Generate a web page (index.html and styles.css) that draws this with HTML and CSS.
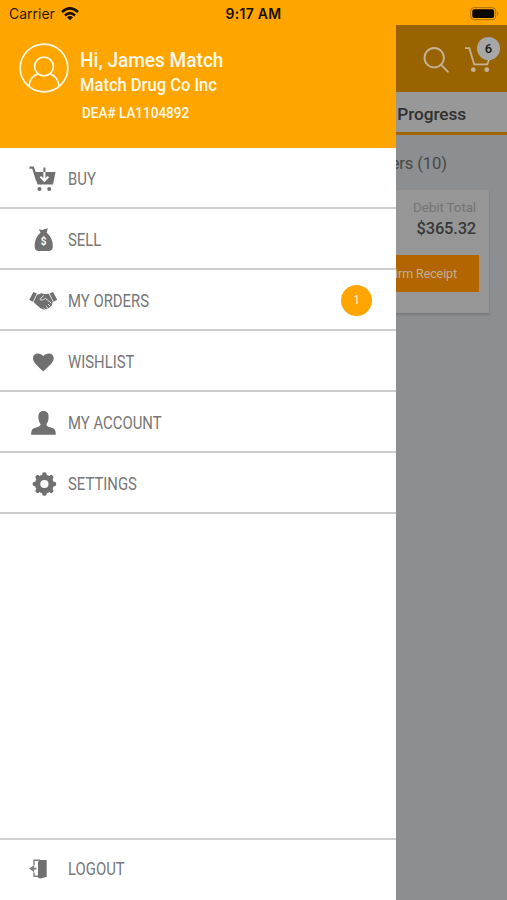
FILE: index.html
```html
<!DOCTYPE html>
<html lang="en">
<head>
<meta charset="utf-8">
<title>Menu</title>
<link rel="stylesheet" href="styles.css">
</head>
<body>
<div class="app">
  <header class="status">
    <div class="carrier"><span>Carrier</span>
      <svg width="18" height="14" viewBox="0 0 18 14"><g fill="none" stroke="#171000" stroke-width="2.6"><path d="M1 5Q9-2.2 17 5"/><path d="M4 8.4Q9 4 14 8.4"/></g><path d="M6 10.3Q9 7.8 12 10.3L9 13.3Z" fill="#171000"/></svg>
    </div>
    <div class="time">9:17 AM</div>
    <svg class="battery" width="30" height="14" viewBox="0 0 30 14"><rect x=".7" y=".7" width="25" height="12" rx="3.5" fill="none" stroke="#a96f08"/><rect x="2.3" y="2.3" width="21.8" height="8.8" rx="2" fill="#080500"/><path d="M27.3 4.5Q29.5 6.7 27.3 9Z" fill="#a96f08"/></svg>
  </header>
  <div class="stage">
    <main class="screen">
      <div class="toolbar">
        <svg width="27" height="27" viewBox="0 0 27 27" fill="none" stroke="#c3b293" stroke-width="1.9"><circle cx="11.2" cy="10.7" r="9.7"/><path d="M18 17.7L25.5 25.3"/></svg>
        <div class="cart">
          <svg width="28" height="26" viewBox="0 0 28 26" fill="none" stroke="#c3b293" stroke-width="1.8"><path d="M0 1.2H4.3L9.2 17.4H22.3L26 7"/><g fill="#c3b293" stroke="none"><circle cx="8.3" cy="22.7" r="2.4"/><circle cx="21.8" cy="22.7" r="2.4"/></g></svg>
          <span class="count">6</span>
        </div>
      </div>
      <div class="tab">Progress</div>
      <div class="section">ers (10)</div>
      <div class="card">
        <div class="debit">Debit Total</div>
        <div class="amount">$365.32</div>
        <div class="confirm">Confirm Receipt</div>
      </div>
    </main>
    <aside class="drawer">
      <div class="profile">
        <svg width="50" height="50" viewBox="0 0 50 50" fill="none" stroke="#fff6df" stroke-width="1.8"><circle cx="25" cy="25" r="23.8"/><circle cx="25" cy="23.5" r="9.4"/><path d="M9.8 43.2C11 35.5 14.5 32 19 30.8M31 30.8C35.5 32 39 35.5 40.2 43.2"/></svg>
        <div class="who">
          <div class="name"><span>Hi, James Match</span></div>
          <div class="company"><span>Match Drug Co Inc</span></div>
          <div class="dea"><span>DEA# LA1104892</span></div>
        </div>
      </div>
      <nav class="menu">
        <div class="item">
          <svg viewBox="0 0 30 30"><path d="M1.5 3.6H5L9.3 16.8" fill="none" stroke="#707070" stroke-width="2.2"/><path d="M6 8H27.5L25 20.5H9.5Z" fill="#707070"/><path d="M16.4 8V16M12.4 12.6L16.4 16.8L20.4 12.6" fill="none" stroke="#fff" stroke-width="2"/><path d="M16.4 3.5V8" stroke="#707070" stroke-width="2"/><circle cx="11.5" cy="25" r="2" fill="#707070"/><circle cx="21.2" cy="25" r="2" fill="#707070"/></svg>
          <span class="label">BUY</span>
        </div>
        <div class="item">
          <svg viewBox="0 0 30 30"><path d="M12.6 7.8L10.8 4.2L14 5L19.8 3.3L18.7 7.8C22.6 10.8 25 16 24.8 21.4C24.8 24.7 23 26 19.8 26H11.7C8.5 26 6.7 24.7 6.7 21.4C6.7 16 8.5 11 12.6 7.8Z" fill="#707070"/><text x="15.6" y="20.2" class="dollar">$</text></svg>
          <span class="label">SELL</span>
        </div>
        <div class="item">
          <svg viewBox="0 0 30 30"><path d="M5.4 6L8.8 7.6L4.8 15.8L1.3 13.8ZM25 6L21.6 7.6L25.6 15.8L29.2 13.8Z" fill="#707070"/><path d="M9 8.8L13.5 7.3L16 8L20.8 7.8L24.8 15.6L23.8 19.5L20.5 22.3L16 23.7L12.5 22.2L8 18.5L5.5 16Z" fill="#707070"/><path d="M15.8 9.3L11.9 13.3Q13.5 15.3 17.5 12.4L23.5 17.3M15.5 22L17.3 23.5M17.8 20L20 22.2M20 18L22.2 20.3" fill="none" stroke="#fff" stroke-width=".8"/></svg>
          <span class="label">MY ORDERS</span><span class="badge">1</span>
        </div>
        <div class="item">
          <svg viewBox="0 0 30 30"><path d="M15.3 24.5C11.5 20.5 5 16 5 11.5C5 5.5 12 5 15.3 9C18.6 5 25.7 5.5 25.7 11.5C25.7 16 19.1 20.5 15.3 24.5Z" fill="#707070"/></svg>
          <span class="label">WISHLIST</span>
        </div>
        <div class="item">
          <svg viewBox="0 0 30 30"><path d="M10.4 8.5C10.1 1.3 20.9 1.3 20.6 8.5C20.6 12.5 19.7 14.5 18.5 16C18.1 18.3 21 19 24.7 20C27.4 21 27.7 23.5 27.8 26.8H3.2C3.3 23.5 3.6 21 6.3 20C10 19 12.9 18.3 12.5 16C11.3 14.5 10.4 12.5 10.4 8.5Z" fill="#707070"/></svg>
          <span class="label">MY ACCOUNT</span>
        </div>
        <div class="item">
          <svg viewBox="-16.4 -15 30 30"><g fill="#707070"><circle r="9.5"/><g id="teeth"><rect x="-2.2" y="-11.7" width="4.4" height="23.4" rx="1.8"/><rect x="-11.7" y="-2.2" width="23.4" height="4.4" rx="1.8"/></g><use href="#teeth" transform="rotate(45)"/></g><circle r="4.1" fill="#fff"/></svg>
          <span class="label">SETTINGS</span>
        </div>
      </nav>
      <div class="item logout">
        <svg viewBox="0 0 30 30"><path d="M6 11V6.3H12M6 18.5V22.3H11" fill="none" stroke="#808080" stroke-width="1.4"/><path d="M10 8L12 6H18.7V23L12 24.5L10 23.5Z" fill="#707070"/><path d="M8.5 14.6H3.8M5.3 12.6L2.4 14.6L5.3 16.7Z" fill="#808080" stroke="#808080" stroke-width="1.6"/></svg>
        <span class="label">LOGOUT</span>
      </div>
    </aside>
  </div>
</div>
</body>
</html>
```
FILE: styles.css
```css
* { box-sizing: border-box; }
body { margin: 0; font-family: Roboto, sans-serif; }
.app { width: 507px; height: 900px; display: flex; flex-direction: column; overflow: hidden; background: #ffa500; }
.status { height: 25px; flex: none; display: grid; grid-template-columns: 1fr auto 1fr; align-items: center; padding: 2px 7px 0 9px; font: 14px/20px Inter, sans-serif; color: #2b1c00; }
.carrier { display: flex; align-items: center; gap: 6px; }
.time { font-weight: 600; font-size: 14px; color: #171000; letter-spacing: .3px; margin-right: 2px; }
.battery { justify-self: end; }
.stage { position: relative; flex: 1; min-height: 0; }
.screen { height: 100%; background: #8c8f91; display: flex; flex-direction: column; align-items: flex-end; }
.toolbar { width: 100%; height: 67px; background: #986300; display: flex; justify-content: flex-end; align-items: flex-start; gap: 15px; padding: 22px 14px 0; }
.cart { position: relative; width: 28px; height: 26px; }
.count { position: absolute; left: 12px; top: -10px; width: 23px; height: 23px; border-radius: 50%; background: #a7a7a7; color: #151515; font-size: 13px; font-weight: 500; line-height: 23px; text-align: center; }
.tab { width: 100%; height: 43px; border-bottom: 3px solid #a36405; background: #989898; padding: 2px 41px 0 0; text-align: right; font-size: 17.3px; font-weight: 500; letter-spacing: -.1px; line-height: 41px; color: #303030; }
.section { height: 55px; padding: 1px 60px 0 0; font-size: 16.7px; letter-spacing: -.15px; line-height: 55px; color: #484848; }
.card { width: 471px; height: 123px; margin-right: 18px; background: #969696; box-shadow: 0 2px 2px #777a7c; padding: 8px 10px 0; text-align: right; }
.debit { font-size: 13.5px; line-height: 19px; letter-spacing: -.15px; padding-right: 3px; color: #747474; }
.amount { font-size: 16.5px; font-weight: 500; letter-spacing: -.2px; line-height: 24px; height: 22px; padding-right: 3px; color: #383838; }
.confirm { height: 37px; margin-top: 16px; background: #b26500; padding-right: 22px; color: #beb19d; font-size: 12.5px; letter-spacing: -.1px; line-height: 37px; }
.drawer { position: absolute; top: 0; left: 0; width: 396px; height: 100%; background: #fff; display: flex; flex-direction: column; }
.profile { height: 123px; flex: none; background: #ffa500; display: flex; gap: 11px; padding: 18px 0 0 19px; color: #fff9ec; }
.who span, .label { display: inline-block; transform-origin: left center; white-space: nowrap; }
.who { padding-top: 4px; font-weight: 500; }
.name { font-size: 20px; line-height: 26px; }
.name span { transform: scaleX(.953); }
.company { font-size: 17.5px; line-height: 24px; }
.company span { transform: scaleX(.945); }
.dea { margin-top: 5px; padding-left: 2px; font-size: 14.5px; line-height: 24px; }
.dea span { transform: scaleX(.933); }
.item { height: 61px; flex: none; display: flex; align-items: center; padding-left: 28px; border-bottom: 2px solid #ccc; }
.item svg { width: 30px; height: 30px; flex: none; margin-right: 10px; }
.menu .item { padding-top: 2px; }
.label { font-size: 17.5px; line-height: 24px; color: #777; transform: scaleX(.85); }
.menu .label { padding-top: 1px; }
.dollar { font: 700 10px Roboto, sans-serif; fill: #fff; text-anchor: middle; }
.badge { margin-left: auto; margin-right: 24px; width: 31px; height: 31px; border-radius: 50%; background: #ffa500; color: #fff3d6; font-size: 12px; line-height: 31px; text-align: center; }
.logout { margin-top: auto; border-top: 2px solid #d0d0d0; border-bottom: 0; height: 62px; padding-bottom: 2px; }
```
